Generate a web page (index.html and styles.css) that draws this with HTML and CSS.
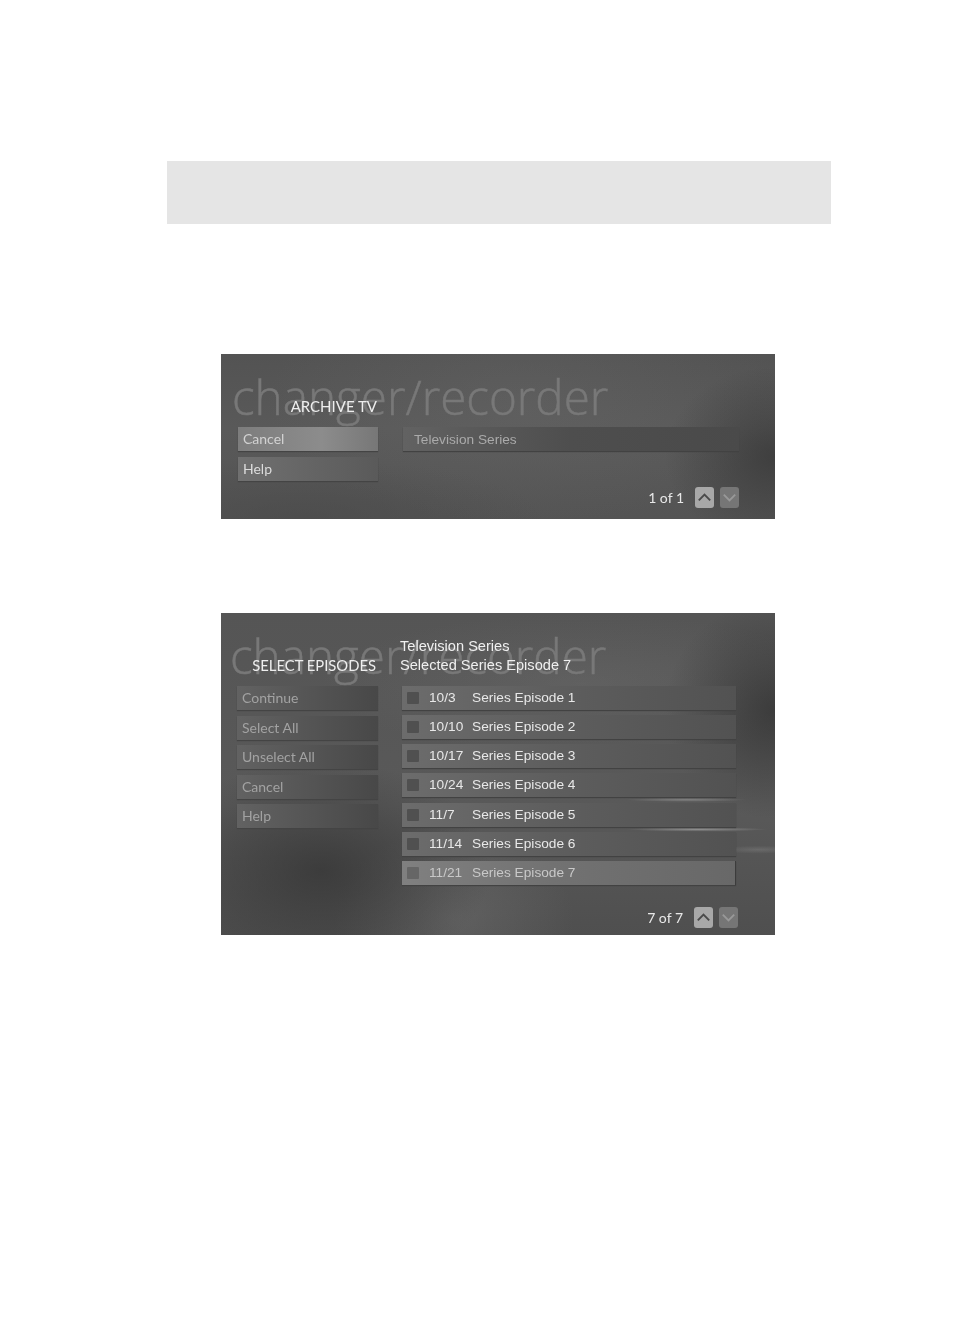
FILE: index.html
```html
<!DOCTYPE html>
<html lang="en">
<head>
<meta charset="utf-8">
<title>Archive TV</title>
<link rel="stylesheet" href="styles.css">
</head>
<body>
<main class="page">
  <div class="banner"></div>

  <section class="screen screen-archive">
    <div class="watermark">changer/recorder</div>
    <div class="columns">
      <div class="side">
        <h2 class="title">ARCHIVE TV</h2>
        <div class="menu">
          <div class="menu-item lit focus">Cancel</div>
          <div class="menu-item lit">Help</div>
        </div>
      </div>
      <div class="content">
        <div class="row plain">Television Series</div>
      </div>
    </div>
    <div class="pager">
      <span class="count">1 of 1</span>
      <span class="arrow up"><svg viewBox="0 0 20 20"><path d="M4 13 10 7l6 6"/></svg></span>
      <span class="arrow down"><svg viewBox="0 0 20 20"><path d="M4 7l6 6 6-6"/></svg></span>
    </div>
  </section>

  <section class="screen screen-select">
    <div class="watermark">changer/recorder</div>
    <div class="columns">
      <div class="side">
        <h2 class="title">SELECT EPISODES</h2>
        <div class="menu">
          <div class="menu-item">Continue</div>
          <div class="menu-item">Select All</div>
          <div class="menu-item">Unselect All</div>
          <div class="menu-item">Cancel</div>
          <div class="menu-item">Help</div>
        </div>
      </div>
      <div class="content">
        <div class="info">
          <div>Television Series</div>
          <div>Selected Series Episode 7</div>
        </div>
        <div class="list">
          <div class="row"><i class="check"></i><span class="date">10/3</span><span>Series Episode 1</span></div>
          <div class="row"><i class="check"></i><span class="date">10/10</span><span>Series Episode 2</span></div>
          <div class="row"><i class="check"></i><span class="date">10/17</span><span>Series Episode 3</span></div>
          <div class="row"><i class="check"></i><span class="date">10/24</span><span>Series Episode 4</span></div>
          <div class="row"><i class="check"></i><span class="date">11/7</span><span>Series Episode 5</span></div>
          <div class="row"><i class="check"></i><span class="date">11/14</span><span>Series Episode 6</span></div>
          <div class="row selected"><i class="check"></i><span class="date">11/21</span><span>Series Episode 7</span></div>
        </div>
      </div>
    </div>
    <div class="pager">
      <span class="count">7 of 7</span>
      <span class="arrow up"><svg viewBox="0 0 20 20"><path d="M4 13 10 7l6 6"/></svg></span>
      <span class="arrow down"><svg viewBox="0 0 20 20"><path d="M4 7l6 6 6-6"/></svg></span>
    </div>
  </section>
</main>
</body>
</html>
```

FILE: styles.css
```css
* { box-sizing: border-box; }
html, body { margin: 0; background: #fff; }
body { height: 1340px; overflow: hidden; }

.page {
  display: flex;
  flex-direction: column;
  align-items: flex-start;
  padding: 161px 0 0 167px;
}

.banner {
  width: 664px;
  height: 63px;
  background: #e5e5e5;
}

.screen {
  position: relative;
  width: 554px;
  margin-left: 54px;
  display: flex;
  flex-direction: column;
  overflow: hidden;
  color: #e4e4e4;
  font-family: "Liberation Sans", Arial, sans-serif;
  font-size: 13.7px;
  background:
    radial-gradient(ellipse 110px 90px at 100% 62%, rgba(52,52,52,.7), rgba(52,52,52,0)),
    radial-gradient(ellipse 260px 120px at 55% 30%, rgba(120,120,120,.22), rgba(120,120,120,0)),
    radial-gradient(ellipse 240px 60px at 15% 100%, rgba(72,72,72,.6), rgba(72,72,72,0)),
    linear-gradient(180deg, #535353 0%, #595959 45%, #545454 100%);
}

.screen > * { filter: blur(.45px); }

.screen-archive {
  height: 165px;
  margin-top: 130px;
  padding: 41px 36px 0 17px;
}

.screen-select {
  height: 322px;
  margin-top: 94px;
  padding: 24px 37px 0 16px;
  background:
    radial-gradient(ellipse 60px 2px at 84% 58%, rgba(140,140,140,.8), rgba(140,140,140,0)),
    radial-gradient(ellipse 70px 2px at 86% 67.2%, rgba(150,150,150,.9), rgba(150,150,150,0)),
    radial-gradient(ellipse 40px 4px at 97% 73.5%, rgba(125,125,125,.5), rgba(125,125,125,0)),
    radial-gradient(ellipse 170px 110px at 18% 80%, rgba(50,50,50,.7), rgba(50,50,50,0)),
    radial-gradient(ellipse 110px 110px at 100% 30%, rgba(50,50,50,.75), rgba(50,50,50,0)),
    radial-gradient(ellipse 120px 90px at 42% 95%, rgba(125,125,125,.35), rgba(125,125,125,0)),
    radial-gradient(ellipse 260px 70px at 65% 22%, rgba(125,125,125,.25), rgba(125,125,125,0)),
    linear-gradient(180deg, #555 0%, #595959 60%, #4f4f4f 100%);
}

.watermark {
  position: absolute;
  left: 11px;
  top: 10px;
  font-family: "Open Sans", sans-serif;
  font-weight: 300;
  font-size: 47.6px;
  line-height: 66px;
  white-space: nowrap;
  color: #787878;
  -webkit-text-stroke: .5px #787878;
}
.screen-select .watermark { left: 9px; top: 10px; }

.columns {
  position: relative;
  display: flex;
  gap: 25px;
}
.screen-select .columns { gap: 24px; }

.side { width: 140px; flex: none; }
.screen-select .side { width: 141px; }

.title {
  margin: 0;
  height: 32px;
  padding: 1px 1px 0 0;
  text-align: right;
  font-family: Lato, sans-serif;
  font-weight: 400;
  font-size: 15px;
  line-height: 20px;
  color: #eee;
}
.screen-select .title { height: 49px; padding: 18px 2px 0 0; font-size: 14.8px; }

.menu { display: flex; flex-direction: column; gap: 6px; }
.screen-select .menu { gap: 5.5px; }

.menu-item {
  height: 24px;
  padding-left: 5px;
  font-family: Lato, sans-serif;
  font-size: 14px;
  line-height: 23px;
  color: #a2a2a2;
  background: linear-gradient(90deg, #626262, #484848);
  box-shadow: 0 1px 1px #444;
}
.menu-item.lit { color: #dcdcdc; background: linear-gradient(90deg, #707070, #5a5a5a); }
.menu-item.focus { color: #d2d2d2; background: linear-gradient(90deg, #7d7d7d, #8c8c8c 60%, #777); }

.content { flex: 1; min-width: 0; }

.info {
  height: 49px;
  margin-left: -2px;
  font-size: 14.6px;
  line-height: 19px;
  color: #f0f0f0;
}

.list { display: flex; flex-direction: column; gap: 5.15px; margin-right: 2px; }

.row {
  display: flex;
  align-items: center;
  height: 24px;
  padding-left: 5px;
  line-height: 24px;
  color: #e8e8e8;
  background: linear-gradient(90deg, #6c6c6c, #5e5e5e 45%, #525252);
  box-shadow: 0 1px 1px #424242;
}
.row.plain {
  margin-top: 32px;
  padding-left: 11px;
  line-height: 23px;
  color: #aaa;
  background: linear-gradient(90deg, #626262, #4e4e4e 50%, #4a4a4a);
}
.row.selected {
  color: #c8c8c8;
  background: linear-gradient(90deg, #808080, #727272 45%, #686868);
  border-right: 1px solid #3c3c3c;
}

.check {
  width: 12px;
  height: 12px;
  margin-right: 10px;
  flex: none;
  border-radius: 1px;
  background: #505050;
}
.selected .check { background: #666; }

.date { width: 43px; flex: none; }

.pager {
  margin-top: auto;
  margin-bottom: 11px;
  display: flex;
  align-items: center;
  justify-content: flex-end;
}
.screen-select .pager { margin-bottom: 7px; }

.count {
  margin-right: 11px;
  font-family: Lato, sans-serif;
  font-size: 14px;
  color: #e8e8e8;
}

.arrow {
  width: 19px;
  height: 21px;
  border-radius: 3px;
  display: flex;
}
.arrow + .arrow { margin-left: 6px; }
.arrow svg { width: 19px; height: 21px; fill: none; stroke-width: 2; }
.arrow.up { background: #a8a8a8; }
.arrow.up svg { stroke: #4a4a4a; }
.arrow.down { background: #767676; }
.arrow.down svg { stroke: #989898; }
```
